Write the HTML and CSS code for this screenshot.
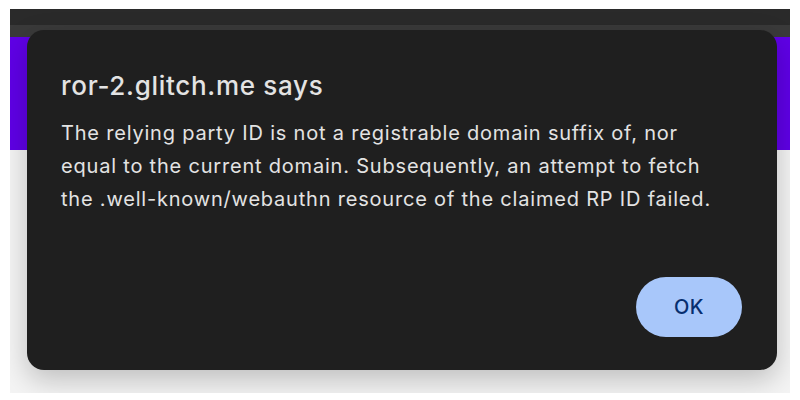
FILE: index.html
```html
<!DOCTYPE html>
<html lang="en">
<head>
<meta charset="utf-8">
<title>ror-2.glitch.me says</title>
<link rel="stylesheet" href="styles.css">
</head>
<body>
<div class="window">
  <div class="tabbar"></div>
  <div class="toolbar"></div>
  <div class="hero"></div>
  <div class="content"></div>
  <div class="dialog" role="alertdialog">
    <h1 class="title">ror-2.glitch.me says</h1>
    <p class="message">The relying party ID is not a registrable domain suffix of, nor equal to the current domain. Subsequently, an attempt to fetch the .well-known/webauthn resource of the claimed RP ID failed.</p>
    <div class="actions">
      <button class="ok">OK</button>
    </div>
  </div>
</div>
</body>
</html>
```
FILE: styles.css
```css
html, body {
  margin: 0;
  padding: 0;
  background: #ffffff;
}
body {
  padding: 9px 10px 0 10px;
  font-family: Inter, "Noto Sans", sans-serif;
}
.window {
  position: relative;
  height: 384px;
  overflow: hidden;
  display: flex;
  flex-direction: column;
}
.tabbar {
  height: 16px;
  background: #2a2a2a;
}
.toolbar {
  height: 12px;
  background: #3a3a3a;
}
.hero {
  height: 113px;
  background: #5f00e6;
}
.content {
  flex: 1;
  background: #f4f4f4;
}
.dialog {
  position: absolute;
  left: 17px;
  top: 21px;
  width: 750px;
  height: 340px;
  box-sizing: border-box;
  padding: 39px 35px 33px 34px;
  background: #1f1f1f;
  border-radius: 17px;
  box-shadow: 0 10px 28px rgba(0, 0, 0, 0.22);
  display: flex;
  flex-direction: column;
}
.title {
  margin: 0;
  font-size: 26px;
  font-weight: 500;
  line-height: 34px;
  letter-spacing: 0.7px;
  color: #e3e3e3;
}
.message {
  margin: 14px 0 0 0;
  max-width: 670px;
  font-size: 20px;
  line-height: 33px;
  letter-spacing: 0.8px;
  color: #e3e3e3;
}
.actions {
  margin-top: auto;
  display: flex;
  justify-content: flex-end;
}
.ok {
  width: 106px;
  height: 60px;
  border: none;
  border-radius: 30px;
  background: #a8c7fa;
  color: #062e6f;
  font-family: Inter, "Noto Sans", sans-serif;
  font-size: 20px;
  font-weight: 500;
  letter-spacing: 0.5px;
}
```
